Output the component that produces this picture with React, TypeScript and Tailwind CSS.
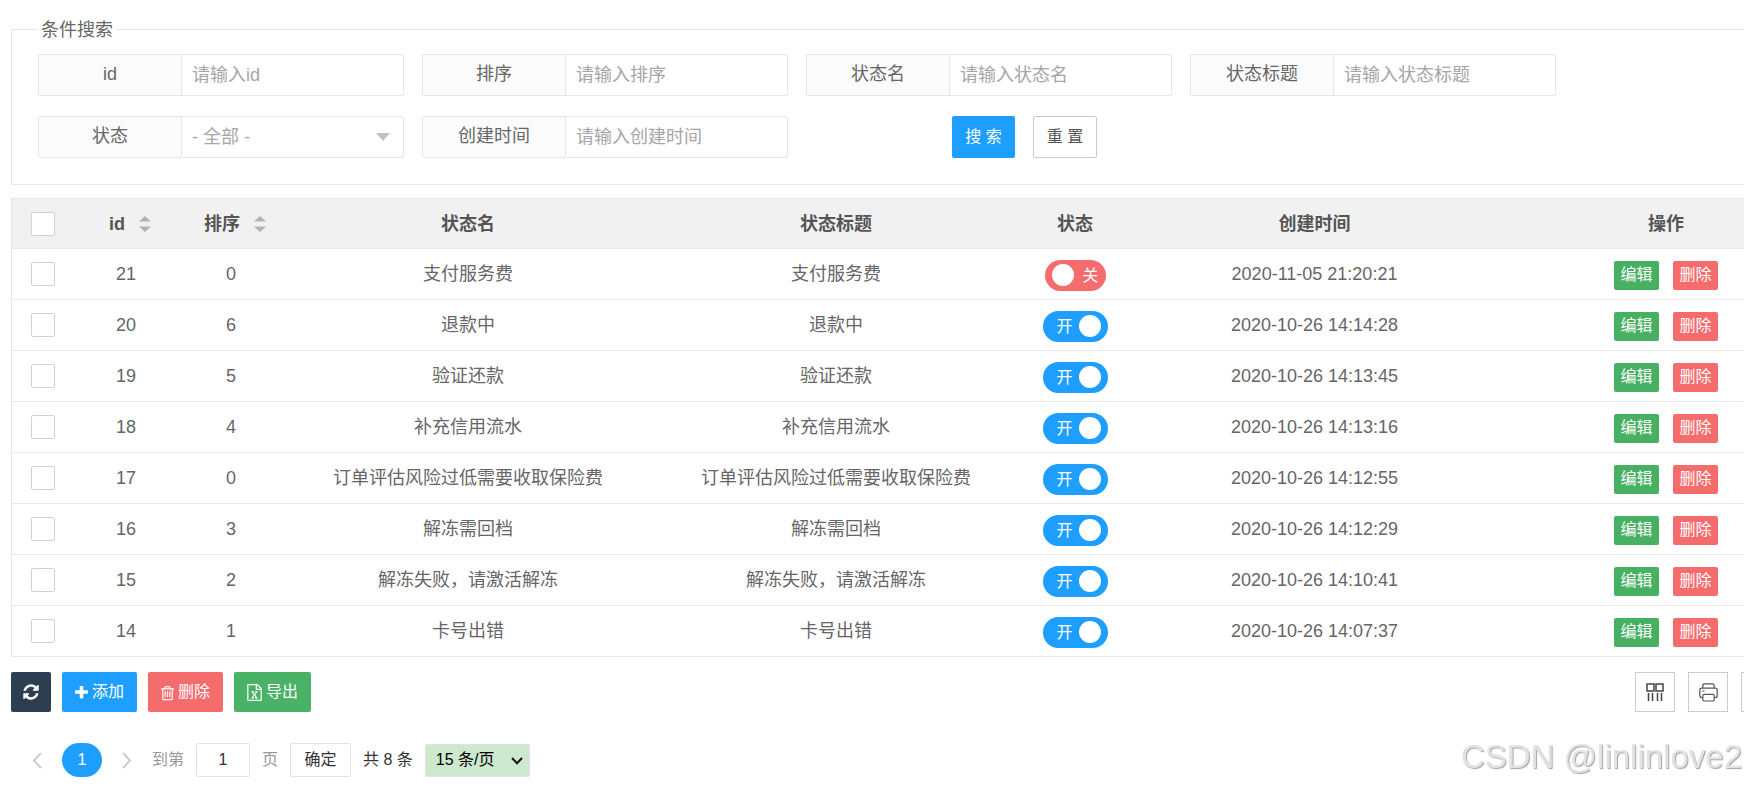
import { useState } from "react";
import type { ReactNode } from "react";

type Row = { id: number; sort: number; name: string; on: boolean; time: string };

const rows: Row[] = [
  { id: 21, sort: 0, name: "支付服务费", on: false, time: "2020-11-05 21:20:21" },
  { id: 20, sort: 6, name: "退款中", on: true, time: "2020-10-26 14:14:28" },
  { id: 19, sort: 5, name: "验证还款", on: true, time: "2020-10-26 14:13:45" },
  { id: 18, sort: 4, name: "补充信用流水", on: true, time: "2020-10-26 14:13:16" },
  { id: 17, sort: 0, name: "订单评估风险过低需要收取保险费", on: true, time: "2020-10-26 14:12:55" },
  { id: 16, sort: 3, name: "解冻需回档", on: true, time: "2020-10-26 14:12:29" },
  { id: 15, sort: 2, name: "解冻失败，请激活解冻", on: true, time: "2020-10-26 14:10:41" },
  { id: 14, sort: 1, name: "卡号出错", on: true, time: "2020-10-26 14:07:37" },
];

function Field({ id, label, children }: { id: string; label: string; children: ReactNode }) {
  return (
    <div className="flex h-[42px] w-[366px] rounded-xs border border-[#e6e6e6]">
      <label
        htmlFor={id}
        className="flex w-[143px] shrink-0 items-center justify-center border-r border-[#e6e6e6] bg-[#fbfbfb] pb-0.5 text-[#666]"
      >
        {label}
      </label>
      <div className="relative flex min-w-0 flex-1">{children}</div>
    </div>
  );
}

function TextField({ id, label }: { id: string; label: string }) {
  return (
    <Field id={id} label={label}>
      <input
        id={id}
        type="text"
        placeholder={"请输入" + label}
        className="w-full bg-transparent px-[10px] outline-none placeholder:text-[#a6a6a6]"
      />
    </Field>
  );
}

function SortArrows() {
  return (
    <svg viewBox="0 0 12 16" className="h-4 w-3" fill="#b2b2b2" aria-hidden="true">
      <path d="M6 0l6 5.5H0zM6 16l6-5.5H0z" />
    </svg>
  );
}

function CheckBox({ label }: { label: string }) {
  return (
    <input
      type="checkbox"
      aria-label={label}
      className="mx-auto block size-6 appearance-none rounded-xs border border-[#d2d2d2] bg-white checked:border-[#1e9fff] checked:bg-[#1e9fff]"
    />
  );
}

function Switch({ initial, label }: { initial: boolean; label: string }) {
  const [on, setOn] = useState(initial);
  return (
    <button
      type="button"
      role="switch"
      aria-checked={on}
      aria-label={label}
      onClick={() => setOn(!on)}
      className={
        on
          ? "mx-auto mt-[2px] flex h-[31px] w-[65px] items-center justify-between rounded-full bg-[#1e9fff] pr-[7px] pl-[14px] text-base text-white"
          : "mx-auto mt-[2px] flex h-[31px] w-[61px] flex-row-reverse items-center justify-between rounded-full bg-[#f56c6c] pr-[7px] pl-[7px] text-base text-white"
      }
    >
      <span className="pt-0.5">{on ? "开" : "关"}</span>
      <span className="size-[22px] rounded-full bg-white" />
    </button>
  );
}

function PlusIcon() {
  return (
    <svg viewBox="192 192 1408 1408" className="size-[13px]" fill="currentColor" aria-hidden="true">
      <path d="M1600 736v192q0 40-28 68t-68 28h-416v416q0 40-28 68t-68 28h-192q-40 0-68-28t-28-68v-416h-416q-40 0-68-28t-28-68v-192q0-40 28-68t68-28h416v-416q0-40 28-68t68-28h192q40 0 68 28t28 68v416h416q40 0 68 28t28 68z" />
    </svg>
  );
}

function RefreshIcon() {
  return (
    <svg viewBox="0 0 1536 1792" className="h-[18px] w-4" fill="currentColor" aria-hidden="true">
      <path d="M1511 1056q0 5-1 7-64 268-268 434.5t-478 166.5q-146 0-282.5-55t-243.5-157l-129 129q-19 19-45 19t-45-19-19-45v-448q0-26 19-45t45-19h448q26 0 45 19t19 45-19 45l-137 137q71 66 161 102t187 36q134 0 250-65t186-179q11-17 53-117 8-23 30-23h192q13 0 22.5 9.5t9.5 22.5zm25-800v448q0 26-19 45t-45 19h-448q-26 0-45-19t-19-45 19-45l138-138q-148-137-349-137-134 0-250 65t-186 179q-11 17-53 117-8 23-30 23h-199q-13 0-22.5-9.5t-9.5-22.5v-7q65-268 270-434.5t480-166.5q146 0 284 55.5t245 156.5l130-129q19-19 45-19t45 19 19 45z" />
    </svg>
  );
}

function TrashIcon() {
  return (
    <svg viewBox="0 0 1408 1792" className="h-[17px] w-[13px]" fill="currentColor" aria-hidden="true">
      <path d="M512 800v576q0 14-9 23t-23 9h-64q-14 0-23-9t-9-23v-576q0-14 9-23t23-9h64q14 0 23 9t9 23zm256 0v576q0 14-9 23t-23 9h-64q-14 0-23-9t-9-23v-576q0-14 9-23t23-9h64q14 0 23 9t9 23zm256 0v576q0 14-9 23t-23 9h-64q-14 0-23-9t-9-23v-576q0-14 9-23t23-9h64q14 0 23 9t9 23zm128 724v-948h-896v948q0 22 7 40.5t14.5 27 10.5 8.5h832q3 0 10.5-8.5t14.5-27 7-40.5zm-672-1076h448l-48-117q-7-9-17-11h-317q-10 2-17 11zm928 32v64q0 14-9 23t-23 9h-96v948q0 83-47 143.5t-113 60.5h-832q-66 0-113-58.5t-47-141.5v-952h-96q-14 0-23-9t-9-23v-64q0-14 9-23t23-9h309l70-167q15-37 54-63t79-26h320q40 0 79 26t54 63l70 167h309q14 0 23 9t9 23z" />
    </svg>
  );
}

function ExcelIcon() {
  return (
    <svg viewBox="0 0 1536 1792" className="h-[17px] w-[15px]" fill="currentColor" aria-hidden="true">
      <path d="M1468 380q28 28 48 76t20 88v1152q0 40-28 68t-68 28h-1344q-40 0-68-28t-28-68v-1600q0-40 28-68t68-28h896q40 0 88 20t76 48zm-444-244v376h376q-10-29-22-41l-313-313q-12-12-41-22zm384 1528v-1024h-416q-40 0-68-28t-28-68v-416h-768v1536h1280zm-979-234v106h281v-106h-75l103-161q5-7 10-16.5t7.5-13.5 3.5-4h2q1 4 5 10 2 4 4.5 7.5t6 8 6.5 8.5l107 161h-76v106h291v-106h-68l-192-273 195-282h67v-107h-279v107h74l-103 159q-4 7-10 16.5t-9 13.5l-2 3h-2q-1-4-5-10-6-11-17-23l-106-159h76v-107h-290v107h68l189 272-194 283h-68z" />
    </svg>
  );
}

function ColumnsIcon() {
  return (
    <svg viewBox="0 0 18 18" className="size-[18px]" fill="none" stroke="#444" strokeWidth="1.5" aria-hidden="true">
      <path d="M1 1h7v7H1zM10 1h7v7h-7zM2.500 10v8M6.500 10v8M11.500 10v8M15.500 10v8" />
    </svg>
  );
}

function PrinterIcon() {
  return (
    <svg viewBox="0 0 19 19" className="size-[19px]" fill="none" stroke="#555" strokeWidth="1.2" aria-hidden="true">
      <path d="M3.800 5.200V2.600Q3.800.8 5.600.8h7.800q1.800 0 1.800 1.800v2.600M3.800 14.600H2.800Q.8 14.600.8 12.600V7.200q0-2 2-2h13.400q2 0 2 2v5.400q0 2-2 2h-1M3.800 13q0-1.600 1.600-1.600h8.200q1.600 0 1.600 1.600v3.400q0 1.600-1.600 1.600H5.400q-1.600 0-1.600-1.600zM3.200 8h2.400" />
    </svg>
  );
}

function ExportIcon() {
  return (
    <svg viewBox="0 0 18 18" className="size-[18px]" fill="none" stroke="#444" strokeWidth="1.2" aria-hidden="true">
      <path d="M10 2H2v14h14V9M8 10l8-8M11 2h5v5" />
    </svg>
  );
}

function Chevron({ d }: { d: string }) {
  return (
    <svg viewBox="0 0 10 17" className="h-[17px] w-[10px]" fill="none" stroke="#c4c4c4" strokeWidth="1.8" aria-hidden="true">
      <path d={d} />
    </svg>
  );
}

const toolButton = "flex h-10 items-center justify-center rounded-xs text-base text-white";
const iconButton = "flex size-10 items-center justify-center border border-[#ccc]";
const cellLine = "border-b border-[#e8e8e8]";

export default function App() {
  return (
    <div className="min-h-screen w-full overflow-x-clip bg-white font-['Liberation_Sans','Noto_Sans_CJK_SC',sans-serif] text-lg leading-6 text-[#666]">
      <main className="min-w-[1782px] pt-4 pb-[9px] pl-[11px]">
        <form onSubmit={(e) => e.preventDefault()}>
          <fieldset className="border border-[#e6e6e6] px-[26px] pb-[26px]">
            <legend className="px-[3px] pt-0.5">条件搜索</legend>
            <div className="flex flex-wrap gap-x-[18px] gap-y-5 pt-3">
              <TextField id="f-id" label="id" />
              <TextField id="f-sort" label="排序" />
              <TextField id="f-name" label="状态名" />
              <TextField id="f-title" label="状态标题" />
              <Field id="f-status" label="状态">
                <select
                  id="f-status"
                  className="w-full appearance-none bg-transparent px-[10px] text-[#a6a6a6] outline-none"
                >
                  <option>- 全部 -</option>
                  <option>开</option>
                  <option>关</option>
                </select>
                <svg
                  viewBox="0 0 14 8"
                  className="pointer-events-none absolute top-4 right-[13px] h-2 w-[14px]"
                  fill="#c2c2c2"
                  aria-hidden="true"
                >
                  <path d="M0 0h14L7 8z" />
                </svg>
              </Field>
              <TextField id="f-time" label="创建时间" />
              <div className="ml-[146px] flex gap-[18px] text-base">
                <button type="submit" className="h-[42px] w-[63px] rounded-xs bg-[#1e9fff] text-white">
                  搜 索
                </button>
                <button type="reset" className="h-[42px] w-[64px] rounded-xs border border-[#c9c9c9] text-[#555]">
                  重 置
                </button>
              </div>
            </div>
          </fieldset>
        </form>

        <table className="mt-[13px] w-full table-fixed border-separate border-spacing-0 border border-b-0 border-[#e6e6e6] text-center">
          <colgroup>
            <col className="w-[62px]" />
            <col className="w-[104px]" />
            <col className="w-[106px]" />
            <col className="w-[368px]" />
            <col className="w-[368px]" />
            <col className="w-[110px]" />
            <col />
            <col className="w-[230px]" />
          </colgroup>
          <thead className="bg-[#f1f1f1] text-[#555]">
            <tr className="h-[50px]">
              <th className={cellLine}>
                <CheckBox label="全选" />
              </th>
              <th className={cellLine}>
                <span className="flex items-center justify-center gap-[14px] pl-2">
                  id
                  <SortArrows />
                </span>
              </th>
              <th className={cellLine}>
                <span className="flex items-center justify-center gap-[14px] pl-2">
                  排序
                  <SortArrows />
                </span>
              </th>
              <th className={cellLine}>状态名</th>
              <th className={cellLine}>状态标题</th>
              <th className={cellLine}>状态</th>
              <th className="border-b border-[#e8e8e8] pr-[52px]">创建时间</th>
              <th className={cellLine}>操作</th>
            </tr>
          </thead>
          <tbody>
            {rows.map((r) => (
              <tr key={r.id} className="h-[51px]">
                <td className={cellLine}>
                  <CheckBox label={"选择 " + r.id} />
                </td>
                <td className={cellLine}>{r.id}</td>
                <td className={cellLine}>{r.sort}</td>
                <td className={cellLine}>{r.name}</td>
                <td className={cellLine}>{r.name}</td>
                <td className={cellLine}>
                  <Switch initial={r.on} label={r.name} />
                </td>
                <td className="border-b border-[#e8e8e8] pr-[52px]">{r.time}</td>
                <td className={cellLine}>
                  <div className="flex justify-center gap-[14px] pt-[2px] text-base text-white">
                    <button type="button" className="h-[29px] w-[45px] rounded-xs bg-[#47b062]">
                      编辑
                    </button>
                    <button type="button" className="h-[29px] w-[45px] rounded-xs bg-[#f56c6c]">
                      删除
                    </button>
                  </div>
                </td>
              </tr>
            ))}
          </tbody>
        </table>

        <div className="mt-[15px] flex justify-between">
          <div className="flex gap-[11px]">
            <button type="button" aria-label="刷新" className={toolButton + " w-10 bg-[#2c3e50]"}>
              <RefreshIcon />
            </button>
            <button type="button" className={toolButton + " w-[75px] gap-1 bg-[#1e9fff]"}>
              <PlusIcon />
              添加
            </button>
            <button type="button" className={toolButton + " w-[75px] gap-1 bg-[#f56c6c]"}>
              <TrashIcon />
              删除
            </button>
            <button type="button" className={toolButton + " w-[77px] gap-1 bg-[#4ab266]"}>
              <ExcelIcon />
              导出
            </button>
          </div>
          <div className="flex gap-[13px] pr-px">
            <button type="button" aria-label="筛选列" className={iconButton}>
              <ColumnsIcon />
            </button>
            <button type="button" aria-label="打印" className={iconButton}>
              <PrinterIcon />
            </button>
            <button type="button" aria-label="导出数据" className={iconButton}>
              <ExportIcon />
            </button>
          </div>
        </div>

        <nav aria-label="分页" className="mt-[31px] flex items-center gap-3 text-base text-[#333]">
          <button type="button" aria-label="上一页" className="flex w-[39px] justify-center pl-3">
            <Chevron d="M9 1L2 8.500L9 16" />
          </button>
          <button type="button" className="h-[34px] w-10 rounded-full bg-[#1e9fff] text-white">
            1
          </button>
          <button type="button" aria-label="下一页" className="flex w-[26px] justify-center">
            <Chevron d="M1 1L8 8.500L1 16" />
          </button>
          <label htmlFor="page" className="text-[#999]">
            到第
          </label>
          <input
            id="page"
            type="text"
            defaultValue="1"
            className="h-[34px] w-[54px] rounded-xs border border-[#e2e2e2] text-center outline-none"
          />
          <span className="text-[#999]">页</span>
          <button type="button" className="h-[34px] w-[61px] rounded-xs border border-[#e2e2e2]">
            确定
          </button>
          <span>共 8 条</span>
          <div className="relative">
            <select
              aria-label="每页条数"
              className="block h-[33px] w-[105px] appearance-none rounded-xs border border-[#e2e2e2] bg-[#cce8cf] pl-[10px] text-black outline-none"
            >
              <option>15 条/页</option>
              <option>30 条/页</option>
            </select>
            <svg
              viewBox="0 0 12 8"
              className="pointer-events-none absolute top-[13px] right-[7px] h-2 w-3"
              fill="none"
              stroke="#111"
              strokeWidth="2"
              aria-hidden="true"
            >
              <path d="M1 1l5 5.300L11 1" />
            </svg>
          </div>
        </nav>
      </main>
      <div className="pointer-events-none fixed right-0.5 bottom-[9px] text-[33px] leading-10 text-[#e2e2e2] [text-shadow:1px_1px_1px_#a3a3a3]">
        CSDN @linlinlove2
      </div>
    </div>
  );
}
